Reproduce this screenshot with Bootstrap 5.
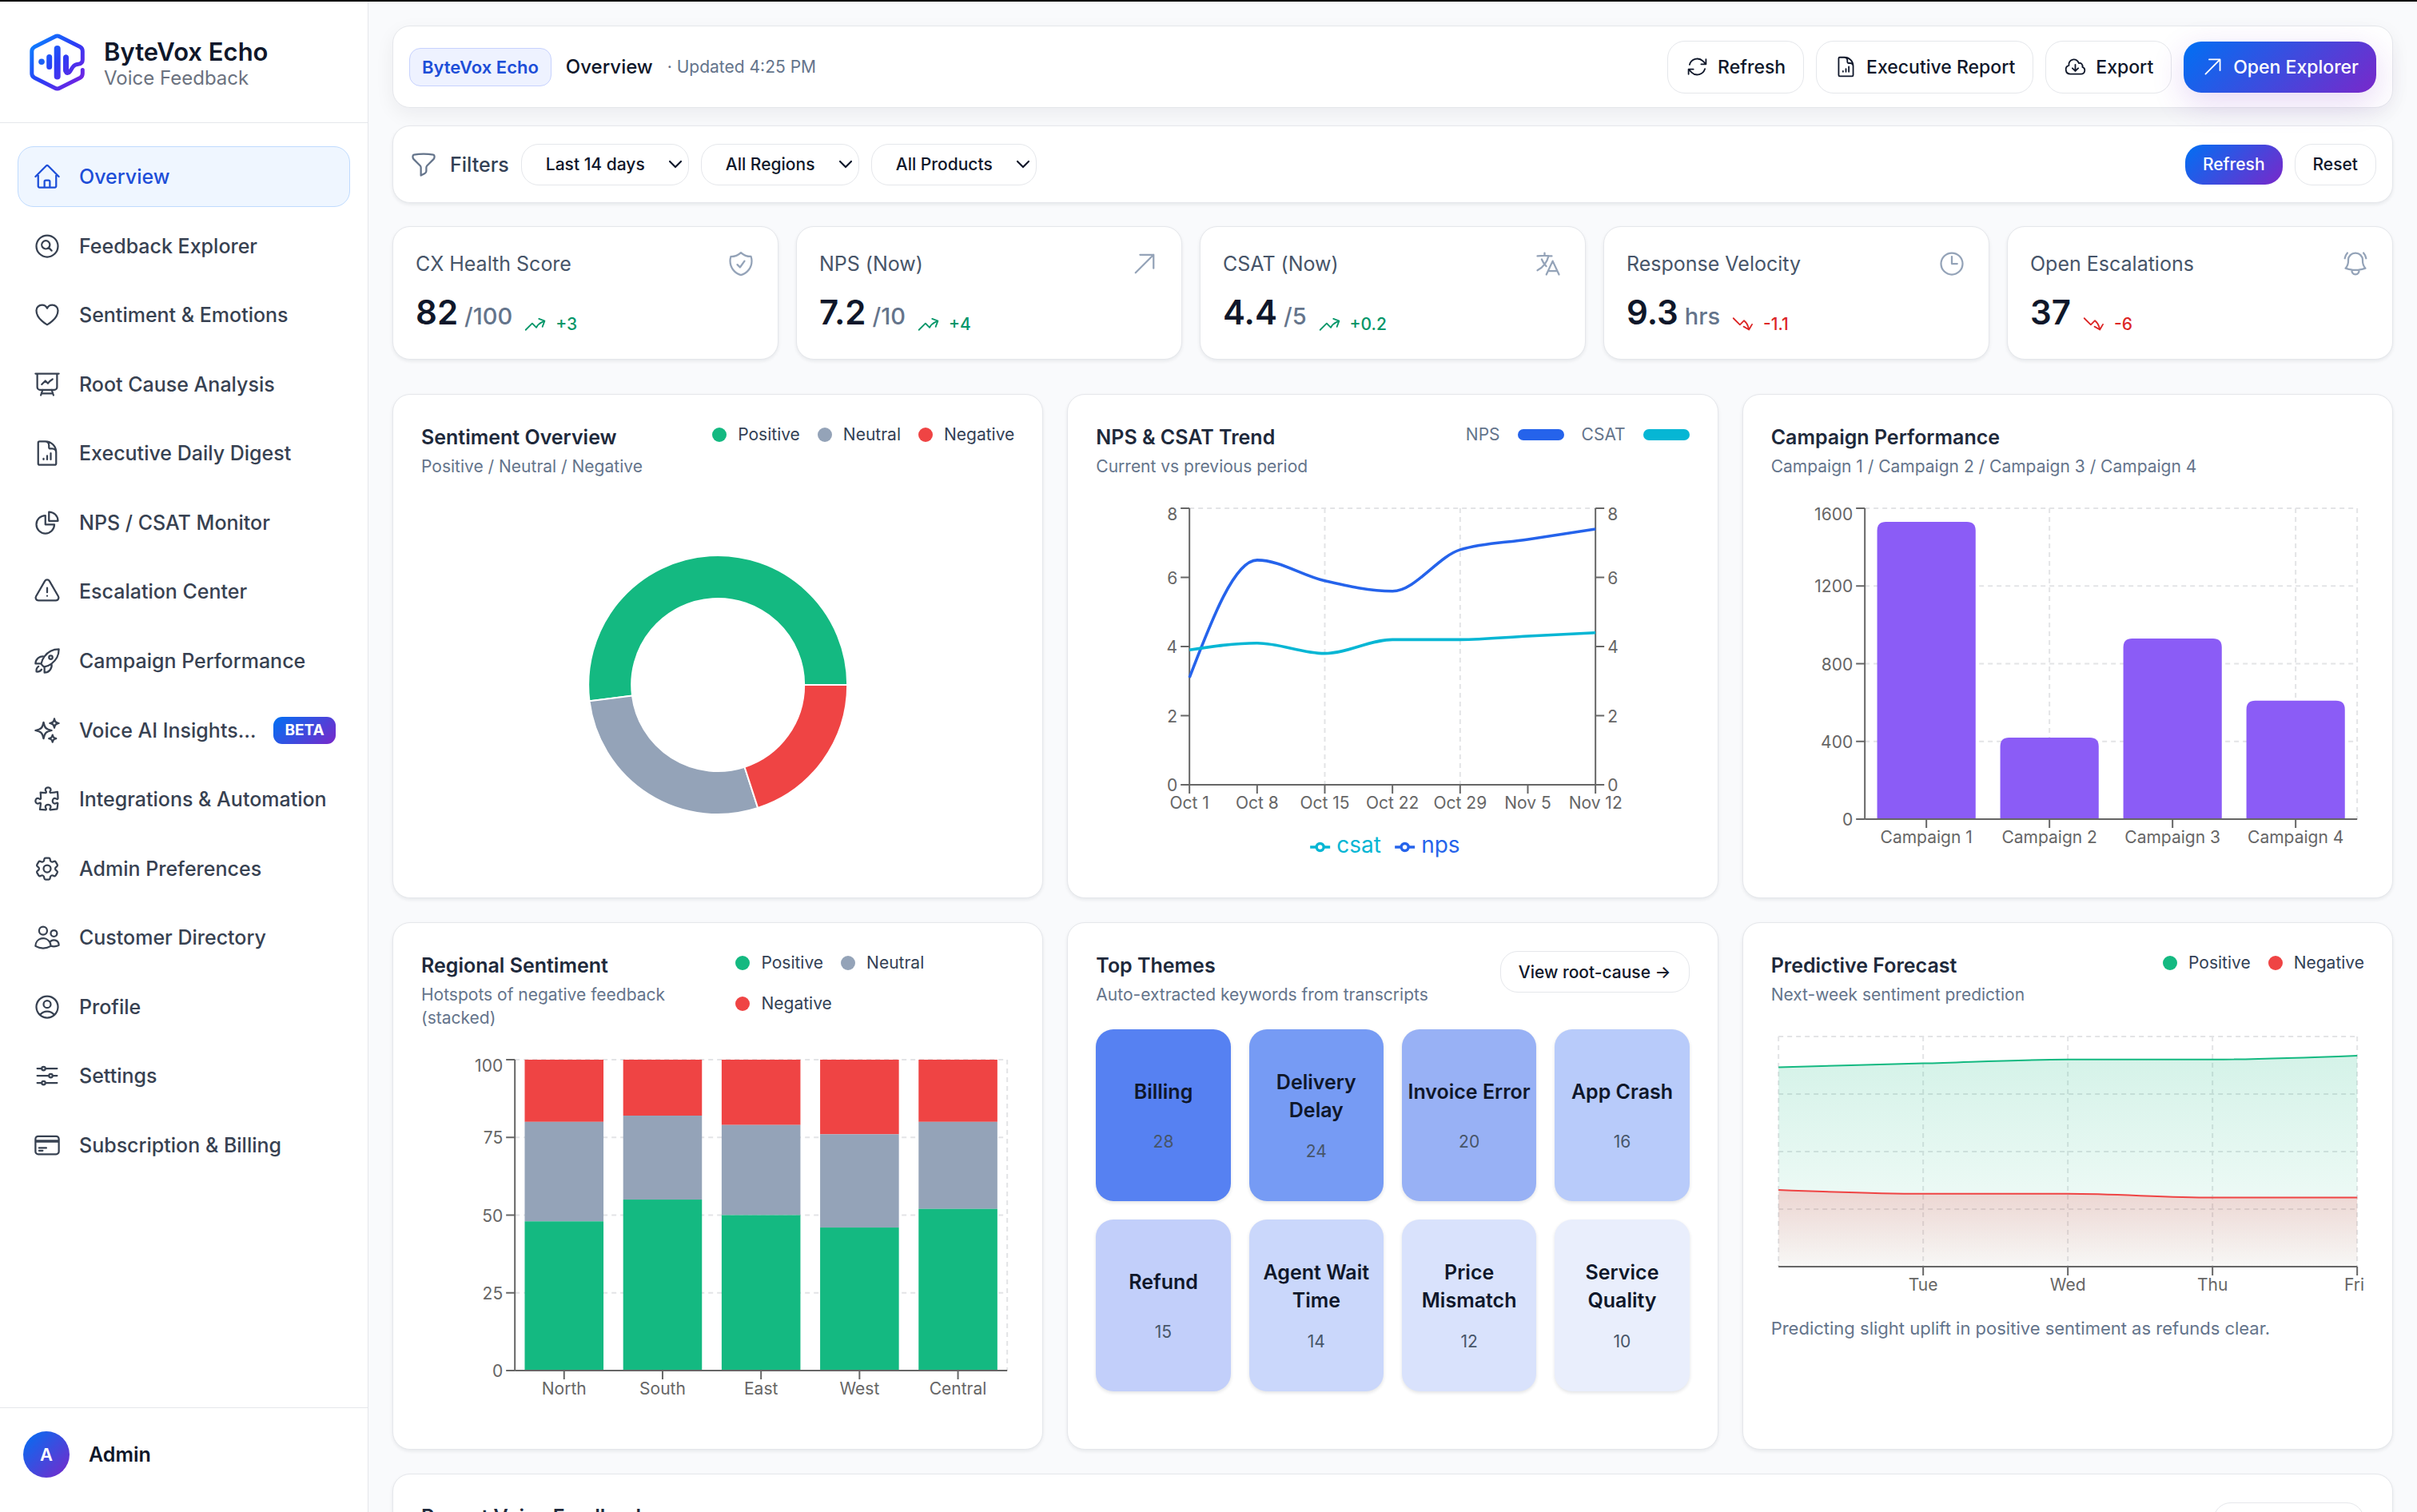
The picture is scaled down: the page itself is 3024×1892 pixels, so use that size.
<!DOCTYPE html>
<html lang="en">
<head>
<meta charset="utf-8">
<meta name="viewport" content="width=device-width, initial-scale=1">
<title>ByteVox Echo – Overview</title>
<link href="https://cdn.jsdelivr.net/npm/bootstrap@5.3.0/dist/css/bootstrap.min.css" rel="stylesheet">
<style>
  :root { --line: #e5e7eb; --ink: #0f172a; --muted: #64748b; --brand: linear-gradient(135deg, #0070f3, #7928ca); }
  body { font-family: Inter, "Liberation Sans", sans-serif; font-size: 25px; line-height: 36px; color: var(--ink); background: #f9fafc; border-top: 2px solid #000; }
  .ico { width: 36px; height: 36px; flex: none; fill: none; stroke: currentColor; stroke-width: 1.5; stroke-linecap: round; stroke-linejoin: round; }
  .ico-md { width: 29px; height: 29px; }

  .side { width: 461px; border-right: 1px solid var(--line); }
  .side-head { height: 152px; padding: 0 36px; gap: 22px; border-bottom: 1px solid var(--line); }
  .brand-name { font-size: 31px; line-height: 36px; }
  .brand-sub { font-size: 24px; line-height: 29px; color: #6b7280; }
  .side-nav { padding: 29px 22px; }
  .side-list { height: 1288px; }
  .side-link { height: 76px; padding: 0 18px; gap: 22px; border: 1px solid transparent; border-radius: 20px; color: #374151; font-weight: 500; text-decoration: none; white-space: nowrap; }
  .side-link.current { background: #eff6ff; border-color: #bfdbfe; color: #1d4ed8; }
  .beta { padding: 0 14px; border-radius: 11px; background: var(--brand); color: #fff; font-size: 19px; line-height: 34px; font-weight: 700; }
  .side-foot { height: 131px; padding: 29px; gap: 22px; border-top: 1px solid var(--line); }
  .avatar { width: 58px; height: 58px; background: var(--brand); color: #fff; font-size: 22px; }

  .page { padding: 30px 30px 0; overflow-y: auto; scrollbar-width: none; }
  .panel { background: #fff; border: 1px solid var(--line); border-radius: 22px; box-shadow: 0 2px 4px rgba(15, 23, 42, .08); }
  .topbar { height: 103px; padding: 0 20px; margin-bottom: 22px; gap: 18px; box-shadow: 0 8px 24px rgba(15, 23, 42, .06); }
  .brand-pill { padding: 0 15px; border: 1px solid #c7d2fe; border-radius: 14px; background: #eef2ff; color: #1d4ed8; font-size: 22px; line-height: 46px; font-weight: 600; }
  .crumb { font-size: 24px; font-weight: 500; }
  .t-sm { font-size: 21px; line-height: 29px; }
  .t-note { font-size: 22px; line-height: 29px; }
  .t-muted { color: var(--muted); }
  .t-slate { color: #475569; }
  .t-dark { color: #334155; }
  .actions { gap: 15px; }
  .ghost, .solid { display: inline-flex; align-items: center; font-weight: 500; background: #fff; color: var(--ink); border: 1px solid var(--line); border-radius: 22px; }
  .solid { background: var(--brand); color: #fff; border: 0; }
  .big { height: 66px; padding: 0 22px; gap: 11px; font-size: 23px; }
  .solid.big { height: 64px; box-shadow: 0 12px 40px rgba(121, 40, 202, .18); }
  .compact { height: 52px; padding: 0 22px; font-size: 21px; line-height: 29px; }
  .solid.compact { height: 50px; }
  .filters { height: 97px; padding: 0 20px; margin-bottom: 29px; gap: 15px; }
  .pick { width: auto; height: 52px; padding: 0 54px 0 30px; border: 1px solid var(--line); border-radius: 22px; font-size: 21px; line-height: 29px; font-weight: 500; color: var(--ink);
    background: #fff url("data:image/svg+xml,%3Csvg xmlns='http://www.w3.org/2000/svg' viewBox='0 0 18 11' fill='none' stroke='%230f172a' stroke-width='2.2' stroke-linecap='round'%3E%3Cpath d='M2 2l7 7 7-7'/%3E%3C/svg%3E") no-repeat right 7px center / 18px 11px; }

  .kpis { --bs-gutter-x: 22px; margin-bottom: 43px; }
  .kpi { height: 167px; padding: 28px; }
  .kpi-ico { color: #94a3b8; }
  .kpi-num { font-size: 42px; line-height: 58px; font-weight: 600; }
  .kpi-unit { font-size: 29px; line-height: 29px; font-weight: 500; color: var(--muted); margin-left: 8px; }
  .kpi-row { margin-top: 14px; }
  .delta { gap: 11px; margin-left: 14px; font-weight: 500; }
  .up { color: #059669; }
  .down { color: #dc2626; }

  .charts { --bs-gutter-x: 30px; --bs-gutter-y: 30px; margin-bottom: 30px; }
  .chart-card { padding: 35px; }
  .chart-head { gap: 22px; margin-bottom: 29px; }
  .chart-title { font-size: 25px; line-height: 36px; font-weight: 600; margin: 0 0 4px; color: #1e293b; }
  .keys { column-gap: 22px; row-gap: 22px; color: #334155; }
  .keys-narrow { width: 47%; }
  .key { gap: 14px; }
  .dot { width: 18px; height: 18px; border-radius: 50%; }
  .bar { width: 58px; height: 14px; border-radius: 7px; }
  .c-pos { background: #14b981; } .c-neu { background: #94a3b8; } .c-neg { background: #ef4444; }
  .c-nps { background: #2563eb; } .c-csat { background: #06b6d4; }
  .plot { display: block; width: 100%; height: 461px; overflow: visible; font-size: 21px; }
  .plot-low { height: 360px; }
  .plot text { fill: #666; }

  .tiles { display: grid; grid-template-columns: repeat(4, 1fr); gap: 23px; }
  .tile { height: 215px; border-radius: 22px; box-shadow: 0 2px 4px rgba(15, 23, 42, .12); gap: 19px; text-align: center; }
  .tile-name { min-height: 46px; line-height: 35px; font-weight: 600; padding: 0 4px; }
</style>
</head>
<body class="vh-100 d-flex overflow-hidden">

<svg width="0" height="0" class="position-absolute" aria-hidden="true">
  <defs>
    <symbol id="i-home" viewBox="0 0 24 24"><path d="m2.25 12 8.954-8.955c.44-.439 1.152-.439 1.591 0L21.75 12M4.5 9.75v10.125c0 .621.504 1.125 1.125 1.125H9.75v-4.875c0-.621.504-1.125 1.125-1.125h2.25c.621 0 1.125.504 1.125 1.125V21h4.125c.621 0 1.125-.504 1.125-1.125V9.75M8.25 21h8.25"/></symbol>
    <symbol id="i-search" viewBox="0 0 24 24"><path d="m15.75 15.75-2.489-2.489m0 0a3.375 3.375 0 1 0-4.773-4.773 3.375 3.375 0 0 0 4.774 4.774ZM21 12a9 9 0 1 1-18 0 9 9 0 0 1 18 0Z"/></symbol>
    <symbol id="i-heart" viewBox="0 0 24 24"><path d="M21 8.25c0-2.485-2.099-4.5-4.688-4.5-1.935 0-3.597 1.126-4.312 2.733-.715-1.607-2.377-2.733-4.313-2.733C5.1 3.75 3 5.765 3 8.25c0 7.22 9 12 9 12s9-4.78 9-12Z"/></symbol>
    <symbol id="i-present" viewBox="0 0 24 24"><path d="M3.75 3v11.25A2.25 2.25 0 0 0 6 16.5h2.25M3.75 3h-1.5m1.5 0h16.5m0 0h1.5m-1.5 0v11.25A2.25 2.25 0 0 1 18 16.5h-2.25m-7.5 0h7.5m-7.5 0-1 3m8.5-3 1 3m0 0 .5 1.5m-.5-1.5h-9.5m0 0-.5 1.5m.75-9 3-3 2.148 2.148A12.061 12.061 0 0 1 16.5 7.605"/></symbol>
    <symbol id="i-report" viewBox="0 0 24 24"><path d="M19.5 14.25v-2.625a3.375 3.375 0 0 0-3.375-3.375h-1.5A1.125 1.125 0 0 1 13.5 7.125v-1.5a3.375 3.375 0 0 0-3.375-3.375H8.25M9 16.5v.75m3-3v3M15 12v5.25m-4.5-15H5.625c-.621 0-1.125.504-1.125 1.125v17.25c0 .621.504 1.125 1.125 1.125h12.75c.621 0 1.125-.504 1.125-1.125V11.25a9 9 0 0 0-9-9Z"/></symbol>
    <symbol id="i-pie" viewBox="0 0 24 24"><path d="M10.5 6a7.5 7.5 0 1 0 7.5 7.5h-7.5V6Z"/><path d="M13.5 10.5H21A7.5 7.5 0 0 0 13.5 3v7.5Z"/></symbol>
    <symbol id="i-warn" viewBox="0 0 24 24"><path d="M12 9v3.75m-9.303 3.376c-.866 1.5.217 3.374 1.948 3.374h14.71c1.73 0 2.813-1.874 1.948-3.374L13.949 3.378c-.866-1.5-3.032-1.5-3.898 0L2.697 16.126ZM12 15.75h.007v.008H12v-.008Z"/></symbol>
    <symbol id="i-rocket" viewBox="0 0 24 24"><path d="M15.59 14.37a6 6 0 0 1-5.84 7.38v-4.8m5.84-2.58a14.98 14.98 0 0 0 6.16-12.12A14.98 14.98 0 0 0 9.631 8.41m5.96 5.96a14.926 14.926 0 0 1-5.841 2.58m-.119-8.54a6 6 0 0 0-7.381 5.84h4.8m2.581-5.84a14.927 14.927 0 0 0-2.58 5.84m2.699 2.7c-.103.021-.207.041-.311.06a15.09 15.09 0 0 1-2.448-2.448 14.9 14.9 0 0 1 .06-.312m-2.24 2.39a4.493 4.493 0 0 0-1.757 4.306 4.493 4.493 0 0 0 4.306-1.758M16.5 9a1.5 1.5 0 1 1-3 0 1.5 1.5 0 0 1 3 0Z"/></symbol>
    <symbol id="i-sparkles" viewBox="0 0 24 24"><path d="M9.813 15.904 9 18.75l-.813-2.846a4.5 4.5 0 0 0-3.09-3.09L2.25 12l2.846-.813a4.5 4.5 0 0 0 3.09-3.09L9 5.25l.813 2.846a4.5 4.5 0 0 0 3.09 3.09L15.75 12l-2.846.813a4.5 4.5 0 0 0-3.09 3.09ZM18.259 8.715 18 9.75l-.259-1.035a3.375 3.375 0 0 0-2.455-2.456L14.25 6l1.036-.259a3.375 3.375 0 0 0 2.455-2.456L18 2.25l.259 1.035a3.375 3.375 0 0 0 2.456 2.456L21.75 6l-1.035.259a3.375 3.375 0 0 0-2.456 2.456ZM16.894 20.567 16.5 21.75l-.394-1.183a2.25 2.25 0 0 0-1.423-1.423L13.5 18.75l1.183-.394a2.25 2.25 0 0 0 1.423-1.423l.394-1.183.394 1.183a2.25 2.25 0 0 0 1.423 1.423l1.183.394-1.183.394a2.25 2.25 0 0 0-1.423 1.423Z"/></symbol>
    <symbol id="i-puzzle" viewBox="0 0 24 24"><path d="M14.25 6.087c0-.355.186-.676.401-.959.221-.29.349-.634.349-1.003 0-1.036-1.007-1.875-2.25-1.875s-2.25.84-2.25 1.875c0 .369.128.713.349 1.003.215.283.401.604.401.959v0a.64.64 0 0 1-.657.643 48.39 48.39 0 0 1-4.163-.3c.186 1.613.293 3.25.315 4.907a.656.656 0 0 1-.658.663v0c-.355 0-.676-.186-.959-.401a1.647 1.647 0 0 0-1.003-.349c-1.036 0-1.875 1.007-1.875 2.25s.84 2.25 1.875 2.25c.369 0 .713-.128 1.003-.349.283-.215.604-.401.959-.401v0c.31 0 .555.26.532.57a48.039 48.039 0 0 1-.642 5.056c1.518.19 3.058.309 4.616.354a.64.64 0 0 0 .657-.643v0c0-.355-.186-.676-.401-.959a1.647 1.647 0 0 1-.349-1.003c0-1.035 1.008-1.875 2.25-1.875 1.243 0 2.25.84 2.25 1.875 0 .369-.128.713-.349 1.003-.215.283-.4.604-.4.959v0c0 .333.277.599.61.58a48.1 48.1 0 0 0 5.427-.63 48.05 48.05 0 0 0 .582-4.717.532.532 0 0 0-.533-.57v0c-.355 0-.676.186-.959.401-.29.221-.634.349-1.003.349-1.035 0-1.875-1.007-1.875-2.25s.84-2.25 1.875-2.25c.37 0 .713.128 1.003.349.283.215.604.401.96.401v0a.656.656 0 0 0 .658-.663 48.422 48.422 0 0 0-.37-5.36c-1.886.342-3.81.574-5.766.689a.578.578 0 0 1-.61-.58v0Z"/></symbol>
    <symbol id="i-cog" viewBox="0 0 24 24"><path d="M9.594 3.94c.09-.542.56-.94 1.11-.94h2.593c.55 0 1.02.398 1.11.94l.213 1.281c.063.374.313.686.645.87.074.04.147.083.22.127.325.196.72.257 1.075.124l1.217-.456a1.125 1.125 0 0 1 1.37.49l1.296 2.247a1.125 1.125 0 0 1-.26 1.431l-1.003.827c-.293.241-.438.613-.43.992a7.723 7.723 0 0 1 0 .255c-.008.378.137.75.43.991l1.004.827c.424.35.534.955.26 1.43l-1.298 2.247a1.125 1.125 0 0 1-1.369.491l-1.217-.456c-.355-.133-.75-.072-1.076.124a6.47 6.47 0 0 1-.22.128c-.331.183-.581.495-.644.869l-.213 1.281c-.09.543-.56.94-1.11.94h-2.594c-.55 0-1.019-.398-1.11-.94l-.213-1.281c-.062-.374-.312-.686-.644-.87a6.52 6.52 0 0 1-.22-.127c-.325-.196-.72-.257-1.076-.124l-1.217.456a1.125 1.125 0 0 1-1.369-.49l-1.297-2.247a1.125 1.125 0 0 1 .26-1.431l1.004-.827c.292-.24.437-.613.43-.991a6.932 6.932 0 0 1 0-.255c.007-.38-.138-.751-.43-.992l-1.004-.827a1.125 1.125 0 0 1-.26-1.43l1.297-2.247a1.125 1.125 0 0 1 1.37-.491l1.216.456c.356.133.751.072 1.076-.124.072-.044.146-.086.22-.128.332-.183.582-.495.644-.869l.214-1.28Z"/><path d="M15 12a3 3 0 1 1-6 0 3 3 0 0 1 6 0Z"/></symbol>
    <symbol id="i-users" viewBox="0 0 24 24"><path d="M15 19.128a9.38 9.38 0 0 0 2.625.372 9.337 9.337 0 0 0 4.121-.952 4.125 4.125 0 0 0-7.533-2.493M15 19.128v-.003c0-1.113-.285-2.16-.786-3.07M15 19.128v.106A12.318 12.318 0 0 1 8.624 21c-2.331 0-4.512-.645-6.374-1.766l-.001-.109a6.375 6.375 0 0 1 11.964-3.07M12 6.375a3.375 3.375 0 1 1-6.75 0 3.375 3.375 0 0 1 6.75 0Zm8.25 2.25a2.625 2.625 0 1 1-5.25 0 2.625 2.625 0 0 1 5.25 0Z"/></symbol>
    <symbol id="i-user" viewBox="0 0 24 24"><path d="M17.982 18.725A7.488 7.488 0 0 0 12 15.75a7.488 7.488 0 0 0-5.982 2.975m11.963 0a9 9 0 1 0-11.963 0m11.963 0A8.966 8.966 0 0 1 12 21a8.966 8.966 0 0 1-5.982-2.275M15 9.75a3 3 0 1 1-6 0 3 3 0 0 1 6 0Z"/></symbol>
    <symbol id="i-sliders" viewBox="0 0 24 24"><path d="M10.5 6h9.75M10.5 6a1.5 1.5 0 1 1-3 0m3 0a1.5 1.5 0 1 0-3 0M3.75 6H7.5m3 12h9.75m-9.75 0a1.5 1.5 0 0 1-3 0m3 0a1.5 1.5 0 0 0-3 0m-3.75 0H7.5m9-6h3.75m-3.75 0a1.5 1.5 0 0 1-3 0m3 0a1.5 1.5 0 0 0-3 0m-9.75 0h9.75"/></symbol>
    <symbol id="i-card" viewBox="0 0 24 24"><path d="M2.25 8.25h19.5M2.25 9h19.5m-16.5 5.25h6m-6 2.25h3m-3.75 3h15a2.25 2.25 0 0 0 2.25-2.25V6.75A2.25 2.25 0 0 0 19.5 4.5h-15a2.25 2.25 0 0 0-2.25 2.25v10.5A2.25 2.25 0 0 0 4.5 19.5Z"/></symbol>
    <symbol id="i-refresh" viewBox="0 0 24 24"><path d="M16.023 9.348h4.992v-.001M2.985 19.644v-4.992m0 0h4.992m-4.993 0 3.181 3.183a8.25 8.25 0 0 0 13.803-3.7M4.031 9.865a8.25 8.25 0 0 1 13.803-3.7l3.181 3.182m0-4.991v4.99"/></symbol>
    <symbol id="i-cloud" viewBox="0 0 24 24"><path d="M12 9.75v6.75m0 0-3-3m3 3 3-3m-8.25 6a4.5 4.5 0 0 1-1.41-8.775 5.25 5.25 0 0 1 10.233-2.33 3 3 0 0 1 3.758 3.848A3.752 3.752 0 0 1 18 19.5H6.75Z"/></symbol>
    <symbol id="i-open" viewBox="0 0 24 24"><path d="m4.5 19.5 15-15m0 0H8.25m11.25 0v11.25"/></symbol>
    <symbol id="i-funnel" viewBox="0 0 24 24"><path d="M12 3c2.755 0 5.455.232 8.083.678.533.09.917.556.917 1.096v1.044a2.25 2.25 0 0 1-.659 1.591l-5.432 5.432a2.25 2.25 0 0 0-.659 1.591v2.927a2.25 2.25 0 0 1-1.244 2.013L9.75 21v-6.568a2.25 2.25 0 0 0-.659-1.591L3.659 7.409A2.25 2.25 0 0 1 3 5.818V4.774c0-.54.384-1.006.917-1.096A48.32 48.32 0 0 1 12 3Z"/></symbol>
    <symbol id="i-shield" viewBox="0 0 24 24"><path d="M9 12.75 11.25 15 15 9.75m-3-7.036A11.959 11.959 0 0 1 3.598 6 11.99 11.99 0 0 0 3 9.749c0 5.592 3.824 10.29 9 11.623 5.176-1.332 9-6.03 9-11.622 0-1.31-.21-2.571-.598-3.751h-.152c-3.196 0-6.1-1.248-8.25-3.285Z"/></symbol>
    <symbol id="i-lang" viewBox="0 0 24 24"><path d="m10.5 21 5.25-11.25L21 21m-9-3h7.5M3 5.621a48.474 48.474 0 0 1 6-.371m0 0c1.12 0 2.233.038 3.334.114M9 5.25V3m3.334 2.364C11.176 10.658 7.69 15.08 3 17.502m9.334-12.138c.896.061 1.785.147 2.666.257m-4.589 8.495a18.023 18.023 0 0 1-3.827-5.802"/></symbol>
    <symbol id="i-clock" viewBox="0 0 24 24"><path d="M12 6v6h4.5m4.5 0a9 9 0 1 1-18 0 9 9 0 0 1 18 0Z"/></symbol>
    <symbol id="i-bell" viewBox="0 0 24 24"><path d="M14.857 17.082a23.848 23.848 0 0 0 5.454-1.31A8.967 8.967 0 0 1 18 9.75V9A6 6 0 0 0 6 9v.75a8.967 8.967 0 0 1-2.312 6.022c1.733.64 3.56 1.085 5.455 1.31m5.714 0a24.255 24.255 0 0 1-5.714 0m5.714 0a3 3 0 1 1-5.714 0M3.124 7.5A8.969 8.969 0 0 1 5.292 3m13.416 0a8.969 8.969 0 0 1 2.168 4.5"/></symbol>
    <symbol id="i-up" viewBox="0 0 24 24"><path d="M2.25 18 9 11.25l4.306 4.306a11.95 11.95 0 0 1 5.814-5.518l2.74-1.22m0 0-5.94-2.281m5.94 2.28-2.28 5.941"/></symbol>
    <symbol id="i-down" viewBox="0 0 24 24"><path d="M2.25 6 9 12.75l4.286-4.286a11.948 11.948 0 0 1 4.306 6.43l.776 2.898m0 0 3.182-5.511m-3.182 5.51-5.511-3.181"/></symbol>
  </defs>
</svg>

<aside class="side d-flex flex-column flex-shrink-0 bg-white">
  <div class="side-head d-flex align-items-center flex-shrink-0">
    <svg width="72" height="76" viewBox="0 0 72 76" fill="none" stroke="url(#logoInk)" stroke-linecap="round" stroke-linejoin="round" aria-hidden="true">
      <defs><linearGradient id="logoInk" gradientUnits="userSpaceOnUse" x1="4" y1="10" x2="66" y2="68"><stop offset="0" stop-color="#0a84ff"/><stop offset=".5" stop-color="#2b3df5"/><stop offset="1" stop-color="#7a1fe0"/></linearGradient></defs>
      <path stroke-width="5" d="M46.500 31V49C46.500 52 49.500 52.500 51.500 49.500L55 44C57 41 59 40.500 62 40.200C65.500 39.800 67.300 38.500 67.300 35V24C67.300 21.500 66.500 20 64.500 18.800L39 6Q35.700 4.200 32.400 6L7 18.800C5 20 3.800 21.500 3.800 24V52C3.800 54.500 5 56 7 57.200L32.400 70Q35.700 71.800 39 70L64.500 57.200C66.500 56 67.300 54.500 67.300 52V47.500"/>
      <path stroke-width="7" d="M25.700 31.500V43.500M46.500 32V48"/>
      <path stroke-width="8" d="M35.700 21V55.500"/>
      <circle cx="16" cy="37.300" r="3.800" fill="#1c60f5" stroke="none"/>
    </svg>
    <div class="pt-1"><div class="brand-name fw-semibold">ByteVox Echo</div><div class="brand-sub">Voice Feedback</div></div>
  </div>
  <nav class="side-nav flex-grow-1" aria-label="Main">
    <div class="side-list d-flex flex-column justify-content-between">
      <a class="side-link current d-flex align-items-center" href="#" aria-current="page"><svg class="ico"><use href="#i-home"/></svg>Overview</a>
      <a class="side-link d-flex align-items-center" href="#"><svg class="ico"><use href="#i-search"/></svg>Feedback Explorer</a>
      <a class="side-link d-flex align-items-center" href="#"><svg class="ico"><use href="#i-heart"/></svg>Sentiment &amp; Emotions</a>
      <a class="side-link d-flex align-items-center" href="#"><svg class="ico"><use href="#i-present"/></svg>Root Cause Analysis</a>
      <a class="side-link d-flex align-items-center" href="#"><svg class="ico"><use href="#i-report"/></svg>Executive Daily Digest</a>
      <a class="side-link d-flex align-items-center" href="#"><svg class="ico"><use href="#i-pie"/></svg>NPS / CSAT Monitor</a>
      <a class="side-link d-flex align-items-center" href="#"><svg class="ico"><use href="#i-warn"/></svg>Escalation Center</a>
      <a class="side-link d-flex align-items-center" href="#"><svg class="ico"><use href="#i-rocket"/></svg>Campaign Performance</a>
      <a class="side-link d-flex align-items-center" href="#"><svg class="ico"><use href="#i-sparkles"/></svg><span class="flex-grow-1">Voice AI Insights…</span><span class="beta">BETA</span></a>
      <a class="side-link d-flex align-items-center" href="#"><svg class="ico"><use href="#i-puzzle"/></svg>Integrations &amp; Automation</a>
      <a class="side-link d-flex align-items-center" href="#"><svg class="ico"><use href="#i-cog"/></svg>Admin Preferences</a>
      <a class="side-link d-flex align-items-center" href="#"><svg class="ico"><use href="#i-users"/></svg>Customer Directory</a>
      <a class="side-link d-flex align-items-center" href="#"><svg class="ico"><use href="#i-user"/></svg>Profile</a>
      <a class="side-link d-flex align-items-center" href="#"><svg class="ico"><use href="#i-sliders"/></svg>Settings</a>
      <a class="side-link d-flex align-items-center" href="#"><svg class="ico"><use href="#i-card"/></svg>Subscription &amp; Billing</a>
    </div>
  </nav>
  <div class="side-foot flex-shrink-0">
    <div class="d-flex align-items-center gap-4">
      <div class="avatar rounded-circle d-flex align-items-center justify-content-center fw-semibold">A</div>
      <div class="fw-semibold">Admin</div>
    </div>
  </div>
</aside>

<main class="page flex-grow-1">
  <header class="panel topbar d-flex align-items-center">
    <span class="brand-pill">ByteVox Echo</span>
    <span class="crumb">Overview</span>
    <span class="t-sm t-muted">· Updated 4:25 PM</span>
    <div class="actions d-flex align-items-center ms-auto">
      <button type="button" class="ghost big"><svg class="ico ico-md"><use href="#i-refresh"/></svg>Refresh</button>
      <button type="button" class="ghost big"><svg class="ico ico-md"><use href="#i-report"/></svg>Executive Report</button>
      <button type="button" class="ghost big"><svg class="ico ico-md"><use href="#i-cloud"/></svg>Export</button>
      <button type="button" class="solid big"><svg class="ico ico-md"><use href="#i-open"/></svg>Open Explorer</button>
    </div>
  </header>

  <section class="panel filters d-flex align-items-center" aria-label="Filters">
    <svg class="ico t-muted"><use href="#i-funnel"/></svg>
    <span class="fw-medium t-dark">Filters</span>
    <select class="pick form-select" aria-label="Period"><option>Last 14 days</option><option>Last 7 days</option></select>
    <select class="pick form-select" aria-label="Region"><option>All Regions</option><option>North</option><option>South</option></select>
    <select class="pick form-select" aria-label="Product"><option>All Products</option><option>Voice</option></select>
    <div class="actions d-flex align-items-center ms-auto">
      <button type="button" class="solid compact">Refresh</button>
      <button type="button" class="ghost compact">Reset</button>
    </div>
  </section>

  <section class="row row-cols-5 kpis" aria-label="Key figures">
    <div class="col"><div class="panel kpi">
      <div class="d-flex justify-content-between t-slate"><span>CX Health Score</span><svg class="ico kpi-ico"><use href="#i-shield"/></svg></div>
      <div class="kpi-row d-flex align-items-end"><span class="kpi-num">82<span class="kpi-unit">/100</span></span><span class="delta t-sm up d-flex align-items-center"><svg class="ico ico-md"><use href="#i-up"/></svg>+3</span></div>
    </div></div>
    <div class="col"><div class="panel kpi">
      <div class="d-flex justify-content-between t-slate"><span>NPS (Now)</span><svg class="ico kpi-ico"><use href="#i-open"/></svg></div>
      <div class="kpi-row d-flex align-items-end"><span class="kpi-num">7.2<span class="kpi-unit">/10</span></span><span class="delta t-sm up d-flex align-items-center"><svg class="ico ico-md"><use href="#i-up"/></svg>+4</span></div>
    </div></div>
    <div class="col"><div class="panel kpi">
      <div class="d-flex justify-content-between t-slate"><span>CSAT (Now)</span><svg class="ico kpi-ico"><use href="#i-lang"/></svg></div>
      <div class="kpi-row d-flex align-items-end"><span class="kpi-num">4.4<span class="kpi-unit">/5</span></span><span class="delta t-sm up d-flex align-items-center"><svg class="ico ico-md"><use href="#i-up"/></svg>+0.2</span></div>
    </div></div>
    <div class="col"><div class="panel kpi">
      <div class="d-flex justify-content-between t-slate"><span>Response Velocity</span><svg class="ico kpi-ico"><use href="#i-clock"/></svg></div>
      <div class="kpi-row d-flex align-items-end"><span class="kpi-num">9.3<span class="kpi-unit">hrs</span></span><span class="delta t-sm down d-flex align-items-center"><svg class="ico ico-md"><use href="#i-down"/></svg>-1.1</span></div>
    </div></div>
    <div class="col"><div class="panel kpi">
      <div class="d-flex justify-content-between t-slate"><span>Open Escalations</span><svg class="ico kpi-ico"><use href="#i-bell"/></svg></div>
      <div class="kpi-row d-flex align-items-end"><span class="kpi-num">37</span><span class="delta t-sm down d-flex align-items-center"><svg class="ico ico-md"><use href="#i-down"/></svg>-6</span></div>
    </div></div>
  </section>

  <section class="row row-cols-3 charts">
    <div class="col"><article class="panel chart-card h-100">
      <div class="chart-head d-flex justify-content-between align-items-start">
        <div><h2 class="chart-title">Sentiment Overview</h2><div class="t-sm t-muted">Positive / Neutral / Negative</div></div>
        <div class="keys t-sm d-flex">
          <span class="key d-flex align-items-center"><i class="dot c-pos"></i>Positive</span>
          <span class="key d-flex align-items-center"><i class="dot c-neu"></i>Neutral</span>
          <span class="key d-flex align-items-center"><i class="dot c-neg"></i>Negative</span>
        </div>
      </div>
      <svg class="plot" id="donut" viewBox="0 0 742 461" role="img" aria-label="Sentiment share"></svg>
    </article></div>

    <div class="col"><article class="panel chart-card h-100">
      <div class="chart-head d-flex justify-content-between align-items-start">
        <div><h2 class="chart-title">NPS &amp; CSAT Trend</h2><div class="t-sm t-muted">Current vs previous period</div></div>
        <div class="keys t-sm d-flex align-items-center">
          <span class="t-muted">NPS</span><i class="bar c-nps"></i><span class="t-muted">CSAT</span><i class="bar c-csat"></i>
        </div>
      </div>
      <svg class="plot" id="trend" viewBox="0 0 742 461" role="img" aria-label="NPS and CSAT by week"></svg>
    </article></div>

    <div class="col"><article class="panel chart-card h-100">
      <div class="chart-head"><h2 class="chart-title">Campaign Performance</h2><div class="t-sm t-muted">Campaign 1 / Campaign 2 / Campaign 3 / Campaign 4</div></div>
      <svg class="plot" id="campaigns" viewBox="0 0 742 461" role="img" aria-label="Campaign volumes"></svg>
    </article></div>

    <div class="col"><article class="panel chart-card h-100">
      <div class="chart-head d-flex justify-content-between align-items-start">
        <div><h2 class="chart-title">Regional Sentiment</h2><div class="t-sm t-muted">Hotspots of negative feedback<br>(stacked)</div></div>
        <div class="keys keys-narrow flex-shrink-0 t-sm d-flex flex-wrap">
          <span class="key d-flex align-items-center"><i class="dot c-pos"></i>Positive</span>
          <span class="key d-flex align-items-center"><i class="dot c-neu"></i>Neutral</span>
          <span class="key d-flex align-items-center"><i class="dot c-neg"></i>Negative</span>
        </div>
      </div>
      <svg class="plot" id="regions" viewBox="0 0 742 461" role="img" aria-label="Sentiment by region"></svg>
    </article></div>

    <div class="col"><article class="panel chart-card h-100">
      <div class="chart-head d-flex justify-content-between align-items-start">
        <div><h2 class="chart-title">Top Themes</h2><div class="t-sm t-muted">Auto-extracted keywords from transcripts</div></div>
        <button type="button" class="ghost compact">View root-cause →</button>
      </div>
      <div class="tiles" id="tiles"></div>
    </article></div>

    <div class="col"><article class="panel chart-card h-100">
      <div class="chart-head d-flex justify-content-between align-items-start">
        <div><h2 class="chart-title">Predictive Forecast</h2><div class="t-sm t-muted">Next-week sentiment prediction</div></div>
        <div class="keys t-sm d-flex">
          <span class="key d-flex align-items-center"><i class="dot c-pos"></i>Positive</span>
          <span class="key d-flex align-items-center"><i class="dot c-neg"></i>Negative</span>
        </div>
      </div>
      <svg class="plot plot-low" id="forecast" viewBox="0 0 742 360" role="img" aria-label="Forecast by day"></svg>
      <div class="t-note t-muted">Predicting slight uplift in positive sentiment as refunds clear.</div>
    </article></div>
  </section>

  <article class="panel chart-card">
    <div class="chart-head d-flex justify-content-between align-items-start">
      <h2 class="chart-title">Recent Voice Feedback</h2>
      <button type="button" class="ghost compact">Open Explorer</button>
    </div>
  </article>
</main>

<script src="https://cdn.jsdelivr.net/npm/bootstrap@5.3.0/dist/js/bootstrap.bundle.min.js"></script>
<script>
  const AXIS = '#666', GRID = '#e3e4e6';
  const seg = (x1, y1, x2, y2, c = AXIS, extra = '') =>
    `<line x1="${x1}" y1="${y1}" x2="${x2}" y2="${y2}" stroke="${c}" stroke-width="2" ${extra}/>`;
  const dash = (x1, y1, x2, y2) => seg(x1, y1, x2, y2, GRID, 'stroke-dasharray="6 5"');
  const label = (x, y, s, anchor = 'middle', extra = '') => `<text x="${x}" y="${y}" text-anchor="${anchor}" ${extra}>${s}</text>`;
  const put = (id, s) => { document.getElementById(id).innerHTML = s; };

  // Monotone cubic curve through the points (Fritsch–Carlson tangents).
  function curve(p) {
    const n = p.length, d = [], m = [];
    for (let i = 0; i < n - 1; i++) d.push((p[i + 1][1] - p[i][1]) / (p[i + 1][0] - p[i][0]));
    for (let i = 1; i < n - 1; i++) {
      const a = d[i - 1], b = d[i];
      m[i] = (Math.sign(a) + Math.sign(b)) * Math.min(Math.abs(a), Math.abs(b), Math.abs(a + b) / 4);
    }
    m[0] = (3 * d[0] - m[1]) / 2;
    m[n - 1] = (3 * d[n - 2] - m[n - 2]) / 2;
    let s = `M${p[0]}`;
    for (let i = 0; i < n - 1; i++) {
      const h = (p[i + 1][0] - p[i][0]) / 3;
      s += `C${p[i][0] + h},${p[i][1] + m[i] * h},${p[i + 1][0] - h},${p[i + 1][1] - m[i + 1] * h},${p[i + 1]}`;
    }
    return s;
  }

  // Value axis; the topmost label is nudged below the plot edge.
  function yAxis(x, top, bottom, ticks, side = -1) {
    let s = seg(x, top, x, bottom);
    ticks.forEach((t, i) => {
      const y = bottom - (bottom - top) * i / (ticks.length - 1);
      s += seg(x, y, x + side * 11, y);
      s += label(x + side * 15, y + (i === ticks.length - 1 ? 15 : 8), t, side < 0 ? 'end' : 'start');
    });
    return s;
  }

  // Donut
  (() => {
    const cx = 371, cy = 230, R = 162, r = 108;
    const at = (a, q) => [cx + q * Math.cos(a * Math.PI / 180), cy - q * Math.sin(a * Math.PI / 180)];
    let a = 0, s = '';
    [[52, '#14b981'], [28, '#94a3b8'], [20, '#ef4444']].forEach(([v, c]) => {
      const b = a + v * 3.6, big = v > 50 ? 1 : 0;
      s += `<path d="M${at(a, R)}A${R},${R},0,${big},0,${at(b, R)}L${at(b, r)}A${r},${r},0,${big},1,${at(a, r)}Z" fill="${c}" stroke="#fff" stroke-width="2"/>`;
      a = b;
    });
    put('donut', s);
  })();

  // Trend
  (() => {
    const L = 117, Rt = 625, T = 9, B = 355, step = (Rt - L) / 6;
    const pts = a => a.map((v, i) => [L + i * step, B - v / 8 * (B - T)]);
    let s = dash(L, T, Rt, T) + dash(L + 2 * step, T, L + 2 * step, B) + dash(L + 4 * step, T, L + 4 * step, B);
    s += seg(L, B, Rt, B) + yAxis(L, T, B, [0, 2, 4, 6, 8]) + yAxis(Rt, T, B, [0, 2, 4, 6, 8], 1);
    ['Oct 1', 'Oct 8', 'Oct 15', 'Oct 22', 'Oct 29', 'Nov 5', 'Nov 12'].forEach((t, i) => {
      s += seg(L + i * step, B, L + i * step, B + 11) + label(L + i * step, B + 30, t);
    });
    s += `<path d="${curve(pts([3.1, 6.5, 5.9, 5.6, 6.8, 7.1, 7.4]))}" fill="none" stroke="#2563eb" stroke-width="3.600"/>`;
    s += `<path d="${curve(pts([3.9, 4.1, 3.8, 4.2, 4.2, 4.3, 4.4]))}" fill="none" stroke="#06b6d4" stroke-width="3.600"/>`;
    [[268, '#06b6d4', 'csat'], [374, '#2563eb', 'nps']].forEach(([x, c, t]) => {
      s += `<g stroke="${c}" stroke-width="3.400" fill="none"><path d="M${x} 433h8m9 0h8"/><circle cx="${x + 12.5}" cy="433" r="4.500"/></g>`;
      s += label(x + 33, 440, t, 'start', `style="fill:${c};font-size:28px"`);
    });
    put('trend', s);
  })();

  // Campaign bars
  (() => {
    const L = 117, Rt = 733, T = 9, B = 398, step = (Rt - L) / 4;
    let s = '';
    for (let i = 1; i <= 4; i++) s += dash(L, B - (B - T) * i / 4, Rt, B - (B - T) * i / 4);
    [L + 1.5 * step, L + 3.5 * step, Rt].forEach(x => { s += dash(x, T, x, B); });
    [1530, 420, 930, 610].forEach((v, i) => {
      const x = L + step * (i + .1), w = step * .8, h = v / 1600 * (B - T), q = 11;
      s += `<path d="M${x},${B}v${q - h}q0,${-q},${q},${-q}h${w - 2 * q}q${q},0,${q},${q}V${B}Z" fill="#8b5cf6"/>`;
      s += seg(x + w / 2, B, x + w / 2, B + 11) + label(x + w / 2, B + 30, 'Campaign ' + (i + 1));
    });
    s += yAxis(L, T, B, [0, 400, 800, 1200, 1600]) + seg(L, B, Rt, B);
    put('campaigns', s);
  })();

  // Regional stacked bars
  (() => {
    const L = 117, Rt = 733, T = 9, B = 398, step = (Rt - L) / 5, H = B - T;
    let s = '';
    for (let i = 1; i <= 4; i++) s += dash(L, B - H * i / 4, Rt, B - H * i / 4);
    s += dash(Rt, T, Rt, B);
    [['North', 48, 32], ['South', 55, 27], ['East', 50, 29], ['West', 46, 30], ['Central', 52, 28]].forEach(([t, p, n], i) => {
      const x = L + step * (i + .1), w = step * .8;
      s += `<rect x="${x}" y="${T}" width="${w}" height="${H * (100 - p - n) / 100}" fill="#ef4444"/>`;
      s += `<rect x="${x}" y="${B - H * (p + n) / 100}" width="${w}" height="${H * n / 100}" fill="#94a3b8"/>`;
      s += `<rect x="${x}" y="${B - H * p / 100}" width="${w}" height="${H * p / 100}" fill="#14b981"/>`;
      s += seg(x + w / 2, B, x + w / 2, B + 11) + label(x + w / 2, B + 30, t);
    });
    s += yAxis(L, T, B, [0, 25, 50, 75, 100]) + seg(L, B, Rt, B);
    put('regions', s);
  })();

  // Forecast areas
  (() => {
    const L = 9, Rt = 733, T = 9, B = 297, step = (Rt - L) / 4;
    let s = `<defs><linearGradient id="gp" x1="0" y1="0" x2="0" y2="1"><stop offset="0" stop-color="#14b981" stop-opacity=".18"/><stop offset="1" stop-color="#14b981" stop-opacity=".03"/></linearGradient>
      <linearGradient id="gn" x1="0" y1="0" x2="0" y2="1"><stop offset="0" stop-color="#ef4444" stop-opacity=".2"/><stop offset="1" stop-color="#ef4444" stop-opacity=".03"/></linearGradient></defs>`;
    for (let i = 0; i < 5; i++) {
      s += dash(L + i * step, T, L + i * step, B);
      if (i) s += dash(L, B - (B - T) * i / 4, Rt, B - (B - T) * i / 4);
    }
    [[[52, 53, 54, 54, 55], '#14b981', 'gp'], [[20, 19, 19, 18, 18], '#ef4444', 'gn']].forEach(([a, c, g]) => {
      const d = curve(a.map((v, i) => [L + i * step, B - v / 60 * (B - T)]));
      s += `<path d="${d}L${Rt},${B}H${L}Z" fill="url(#${g})"/><path d="${d}" fill="none" stroke="${c}" stroke-width="2"/>`;
    });
    s += seg(L, B, Rt, B);
    ['Tue', 'Wed', 'Thu', 'Fri'].forEach((t, i) => {
      const x = L + (i + 1) * step;
      s += seg(x, B, x, B + 11) + (i === 3 ? label(742, B + 30, t, 'end') : label(x, B + 30, t));
    });
    put('forecast', s);
  })();

  // Theme tiles, shaded by mention count
  put('tiles', [['Billing', 28, '#5681f2'], ['Delivery Delay', 24, '#769bf4'], ['Invoice Error', 20, '#98b1f5'], ['App Crash', 16, '#b8cbfa'],
    ['Refund', 15, '#c2cffa'], ['Agent Wait Time', 14, '#cad7fb'], ['Price Mismatch', 12, '#d9e2fc'], ['Service Quality', 10, '#e9eefc']]
    .map(([t, n, c]) => `<div class="tile d-flex flex-column align-items-center justify-content-center" style="background:${c}"><div class="tile-name">${t}</div><div class="t-sm t-slate">${n}</div></div>`).join(''));
</script>
</body>
</html>
